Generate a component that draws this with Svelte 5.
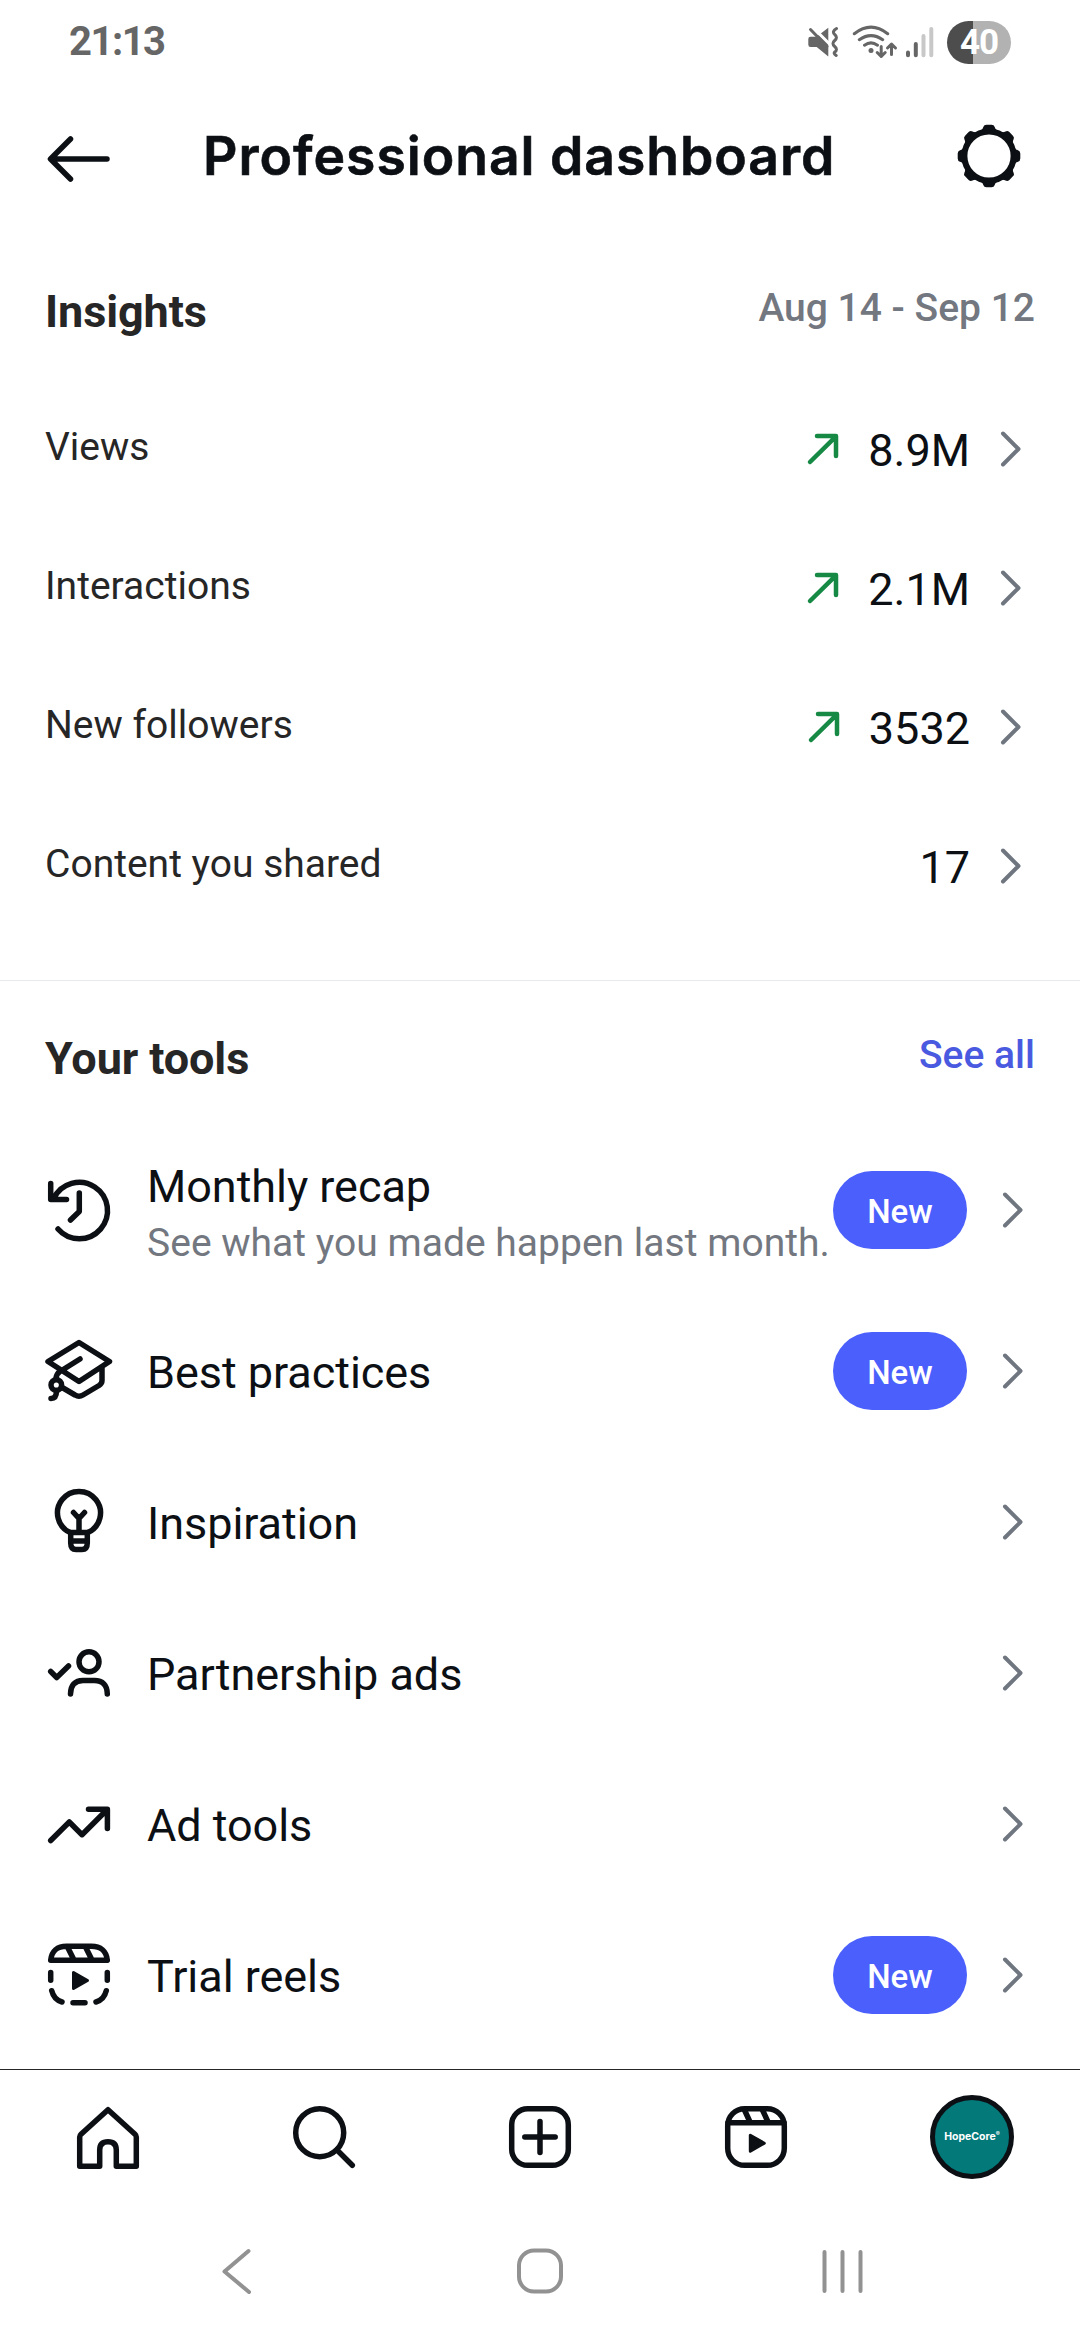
<script>
  const stats = [
    { label: 'Views', value: '8.9M', up: true },
    { label: 'Interactions', value: '2.1M', up: true },
    { label: 'New followers', value: '3532', up: true },
    { label: 'Content you shared', value: '17', up: false }
  ];
  const tools = [
    { icon: 'recap', title: 'Monthly recap', sub: 'See what you made happen last month.', isNew: true },
    { icon: 'cap', title: 'Best practices', isNew: true },
    { icon: 'bulb', title: 'Inspiration' },
    { icon: 'partner', title: 'Partnership ads' },
    { icon: 'trend', title: 'Ad tools' },
    { icon: 'trial', title: 'Trial reels', isNew: true }
  ];
</script>

{#snippet chevron()}
  <svg class="chevron" viewBox="0 0 24 40"><path d="M3 4.500 18.500 20 3 35.500" /></svg>
{/snippet}

<div class="screen">
  <div class="status">
    <span class="time">21:13</span>
    <div class="indicators">
      <svg class="mute" viewBox="0 0 30 32">
        <path class="fill" d="M2.500 10.700H8.500L20.300 1.700V30.500L8.700 21H2.500Q.3 21 .3 18.500V13Q.3 10.700 2.500 10.700z" />
        <path class="gap" d="M4 .5 23 19.500" />
        <path class="line" d="M2.500 3.500 19 20.500" />
        <path class="line" d="M28.500 2.500 q-5 3 -1.800 6 q3.500 3 0 6 q-3.500 3 0 6 q3.500 3 0 5.500 q-1.500 1.500 1.500 3.500" />
      </svg>
      <svg class="wifi" viewBox="0 0 46 36">
        <path class="line" d="M2.300 9.700Q19 -3.500 35.700 9.700M7.300 15.700Q19 7.500 30.700 15.700M12.500 21.200Q19 16.500 25.500 21.200" />
        <circle class="fill" cx="19" cy="26.500" r="2.500" />
        <path class="line" d="M29.200 22.500v10m-4-4 4 4 4-4M39.500 30.500V20m-4 4 4-4 4 4" />
      </svg>
      <svg class="signal" viewBox="0 0 28 31">
        <path d="M2 25.500v2.800M9.800 17v11.300" stroke="#666" />
        <path d="M17.500 9v19.300M25.300 2v26.300" stroke="#c8c8c8" />
      </svg>
      <span class="battery">40</span>
    </div>
  </div>

  <header>
    <svg class="back" viewBox="0 0 64 50"><path d="M61 25H6M24.500 5 4.500 25l20 20" /></svg>
    <h1>Professional dashboard</h1>
    <svg class="gear" viewBox="0 0 64 66">
      <circle cx="32" cy="33" r="24.600" />
      {#each [0, 45, 90, 135, 180, 225, 270, 315] as a}
        <path d="M21.500 8.500Q25.500 7 26.300 4Q27 1.700 29.500 1.700H34.500Q37 1.700 37.700 4Q38.500 7 42.500 8.500z" transform={`rotate(${a} 32 33)`} />
      {/each}
    </svg>
  </header>

  <section class="insights">
    <div class="heading"><h2>Insights</h2><span class="range">Aug 14 - Sep 12</span></div>
    {#each stats as s}
      <div class="stat">
        <span class="label">{s.label}</span>
        {#if s.up}<svg class="up" viewBox="0 0 34 34"><path d="M4 30 30 4.300M11 4H30V24" /></svg>{/if}
        <span class="value">{s.value}</span>
        {@render chevron()}
      </div>
    {/each}
  </section>

  <section class="tools">
    <div class="heading"><h2>Your tools</h2><span class="link">See all</span></div>
    {#each tools as t}
      <div class="tool" class:tall={t.sub}>
        <svg class="icon" viewBox="0 0 72 72">
          {#if t.icon === 'recap'}
            <path d="M7.700 9.500V25.500H23.500M10.800 24.500A28.200 28.200 0 1 1 15 55M36.300 19V37.500L27.500 46" />
          {:else if t.icon === 'cap'}
            <path d="M36 7.500 66.500 26.500 36 46.500 5 26.500zM37 24 17 36.500Q13 39 13 44M59 32V45.500Q59 48.500 56 50.500L40 60Q36 62.500 32 60L20 53M13.500 56Q13.500 63.500 8 63.500" />
            <circle cx="13.300" cy="50" r="5.300" />
          {:else if t.icon === 'bulb'}
            <path d="M27.500 46.700A21.500 21.500 0 1 1 44.500 46.700M27.700 46.500H44.300V57Q44.300 63.500 39 63.500H33Q27.700 63.500 27.700 57zM27.700 55H44.300M36 46V32.500M30.500 26.500 36 32.500 41.500 26.500" />
          {:else if t.icon === 'partner'}
            <circle cx="46" cy="24.800" r="10" />
            <path d="M7.700 34.500 13.700 40.500 25.500 29M27.500 57C27.500 48 32 43.500 40 43.500H51.500C59.500 43.500 64.300 48 64.300 57" />
          {:else if t.icon === 'trend'}
            <path d="M7.700 52.500 26.300 34 39 46.700 64 21.700M45.500 21.300H64.400V40.500" />
          {:else}
            <path d="M7.700 21.300C8.500 12 14.500 7.300 23.500 7.300H48.500C57.500 7.300 63.500 12 64.300 21.300zM25 9 30.500 20M43 9 48.500 20M7.700 33.500V41.300M64.300 33.500V41.300M8.700 51.700Q11 61 19 63M63.300 51.700Q61 61 53 63M30 63.800H42" />
            <path class="solid" d="M30.500 33.500V49.500L44.500 41.500z" />
          {/if}
        </svg>
        <div class="text">
          <span class="title">{t.title}</span>
          {#if t.sub}<span class="sub">{t.sub}</span>{/if}
        </div>
        {#if t.isNew}<span class="pill">New</span>{/if}
        {@render chevron()}
      </div>
    {/each}
  </section>

  <nav class="tabs">
    <div><svg viewBox="0 0 72 72"><path d="M7.700 36Q7.700 34.500 9 33.300L36 8.700 63 33.300Q64.300 34.500 64.300 36V65.300H44.300V49Q44.300 40.700 36 40.700 27.700 40.700 27.700 49V65.300H7.700z" /></svg></div>
    <div><svg viewBox="0 0 72 72"><circle cx="31.700" cy="31.700" r="24" /><path d="M49 49 64.300 64.300" /></svg></div>
    <div><svg viewBox="0 0 72 72"><rect x="7.700" y="7.700" width="56.600" height="56.600" rx="16" /><path d="M20.800 36H51.200M36 20.500V51.500" /></svg></div>
    <div><svg viewBox="0 0 72 72"><rect x="7.700" y="7.700" width="56.600" height="56.600" rx="17" /><path d="M8 21.700H64M24.500 9 30 21M42.500 9 48 21" /><path class="solid" d="M30.300 34.200V50.200L44.300 42.200z" /></svg></div>
    <div><span class="avatar">HopeCore<sup>®</sup></span></div>
  </nav>

  <div class="system">
    <svg viewBox="0 0 50 50"><path d="M36.500 5 12.500 25.500 37 46" /></svg>
    <svg viewBox="0 0 50 50"><rect x="4" y="4.500" width="42" height="41" rx="15" /></svg>
    <svg viewBox="0 0 50 50"><path d="M6.500 6V45M24.500 6V45M42.500 6V45" /></svg>
  </div>
</div>

<style>
  :global(body) { background: #fff; }
  .screen { width: 1080px; height: 2340px; box-sizing: border-box; display: flex; flex-direction: column; overflow: hidden; font-family: Roboto, sans-serif; color: #0c1014; background: #fff; }
  svg { display: block; flex: none; fill: none; stroke: currentColor; stroke-linecap: round; stroke-linejoin: round; }
  h1, h2 { margin: 0; }

  .status { height: 84px; flex: none; display: flex; justify-content: space-between; align-items: center; padding: 0 69px; color: #666; }
  .time { font: 700 40px/40px Roboto, sans-serif; letter-spacing: -1.5px; }
  .indicators { display: flex; align-items: center; }
  .fill { fill: #666; stroke: none; }
  .line { stroke-width: 3; }
  .gap { stroke: #fff; stroke-width: 3; }
  .mute { width: 30px; height: 32px; margin-right: 14px; }
  .wifi { width: 46px; height: 36px; margin-right: 8px; }
  .signal { width: 28px; height: 31px; margin-right: 13px; stroke-width: 4; }
  .battery { width: 64px; height: 43px; border-radius: 22px; background: linear-gradient(90deg, #4d4d4d 40%, #b2b2b2 40%); color: #fff; font: 700 35px/44px Roboto, sans-serif; letter-spacing: -1px; text-align: center; }

  header { height: 144px; flex: none; display: flex; align-items: center; padding: 0 59px 0 46px; }
  .back { width: 64px; height: 50px; stroke-width: 5.5; margin-top: 6px; }
  h1 { flex: 1; padding-left: 93px; font: 600 53.500px/66px Inter, sans-serif; letter-spacing: .95px; -webkit-text-stroke: .6px currentColor; white-space: nowrap; }
  .gear { width: 64px; height: 66px; }
  .gear circle { stroke-width: 6; }
  .gear path { fill: currentColor; stroke: none; }

  .heading { display: flex; justify-content: space-between; padding: 0 45px; }
  h2 { font-weight: 700; font-size: 45px; line-height: 56px; letter-spacing: -.1px; color: #262626; }
  .range, .link { font-size: 39px; line-height: 48px; font-weight: 500; }
  .range { color: #737780; }
  .link { color: #4a5ae0; }
  .chevron { width: 24px; height: 40px; stroke: #6f7680; stroke-width: 4; }

  .insights { height: 753px; flex: none; border-bottom: 1px solid #e8e9eb; box-sizing: border-box; padding-top: 56px; }
  .insights .heading { height: 95px; }
  .stat { height: 139px; display: flex; align-items: center; padding: 0 56px 0 45px; }
  .label { flex: 1; font-size: 39px; color: #262626; padding-bottom: 4px; }
  .up { width: 34px; height: 34px; color: #168944; stroke-width: 4.5; margin-right: 28px; }
  .value { font-size: 45px; margin-right: 30px; padding-top: 3px; }

  .tools { height: 1088px; flex: none; padding-top: 50px; box-sizing: border-box; }
  .tools .heading { height: 94px; }
  .tool { height: 151px; display: flex; align-items: center; padding: 0 54px 0 43px; }
  .tool.tall { height: 170px; }
  .icon { width: 72px; height: 72px; stroke-width: 5.5; }
  .text { flex: 1; display: flex; flex-direction: column; padding: 4px 0 0 32px; white-space: nowrap; }
  .tall .text { padding-top: 11px; }
  .title { font-size: 45px; line-height: 54px; letter-spacing: -.05px; }
  .sub { font-size: 39px; line-height: 58px; letter-spacing: .02px; color: #737780; }
  .pill { width: 134px; height: 78px; border-radius: 39px; background: #4a5ffb; color: #fff; font-weight: 500; font-size: 33px; line-height: 81px; text-align: center; margin-right: 35px; }
  .solid { fill: currentColor; stroke-width: 3; }

  .tabs { height: 135px; flex: none; border-top: 1px solid #262626; box-sizing: border-box; display: grid; grid-template-columns: repeat(5, 1fr); }
  .tabs div { display: flex; justify-content: center; align-items: center; }
  .tabs svg { width: 72px; height: 72px; stroke-width: 5.5; }
  .avatar { width: 84px; height: 84px; border-radius: 50%; border: 5px solid #0c1014; box-sizing: border-box; background: #04797a; color: #fff; font: 700 10.500px/73px Inter, sans-serif; text-align: center; }
  .avatar sup { font-size: 6px; line-height: 0; }

  .system { flex: 1; display: flex; justify-content: center; gap: 253px; padding-top: 42px; color: #929292; }
  .system svg { width: 50px; height: 50px; stroke-width: 4; }
</style>
